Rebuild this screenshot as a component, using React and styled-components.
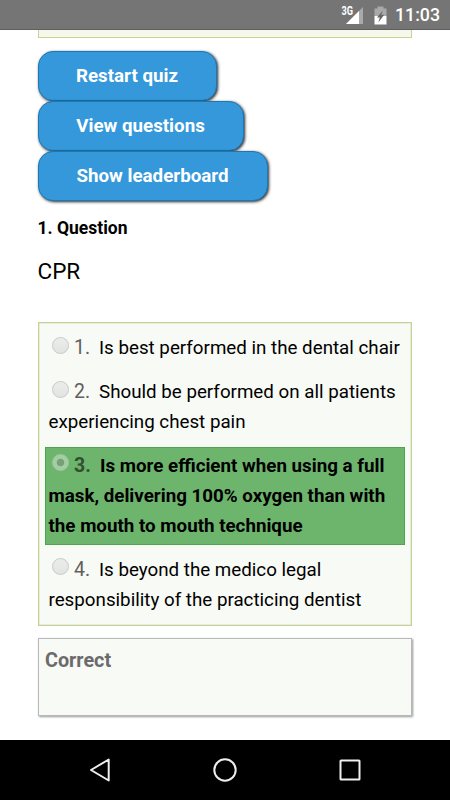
import React from "react";
import styled, { createGlobalStyle } from "styled-components";

const answers = [
  { id: 1, lines: ["Is best performed in the dental chair"] },
  {
    id: 2,
    lines: ["Should be performed on all patients", "experiencing chest pain"],
  },
  {
    id: 3,
    correct: true,
    lines: [
      "Is more efficient when using a full",
      "mask, delivering 100% oxygen than with",
      "the mouth to mouth technique",
    ],
  },
  {
    id: 4,
    lines: [
      "Is beyond the medico legal",
      "responsibility of the practicing dentist",
    ],
  },
];

const StatusBar = () => (
  <Status>
    <SignalIcon width="23" height="20" viewBox="0 0 23 20">
      <path d="M5 19 22 2V19z" fill="#a9a9a9" />
      <path d="M5 19 18 6V19z" fill="#fff" />
      <text x="0.5" y="9.5" textLength="11.5" lengthAdjust="spacingAndGlyphs">
        3G
      </text>
    </SignalIcon>
    <BatteryIcon width="13" height="19" viewBox="0 0 13 19">
      <path d="M3.5 .5h6v2h3v7.5H.5v-7.5h3z" fill="#a9a9a9" />
      <path d="M.5 10h12v8.5H.5z" fill="#fff" />
      <path d="M8.8 4.5 3 11.6h2.8L4.4 16.5l5.8-7.7H7.2z" fill="#666" />
    </BatteryIcon>
    <Clock>11:03</Clock>
  </Status>
);

const Answer = ({ item }) => (
  <AnswerItem $correct={item.correct}>
    {item.lines.map((line, i) => (
      <Line key={line}>
        {i === 0 && (
          <>
            <Radio $checked={item.correct} />
            <Num $correct={item.correct}>{item.id}.</Num>
          </>
        )}
        <span>{line}</span>
      </Line>
    ))}
  </AnswerItem>
);

const App = () => {
  return (
    <Screen>
      <GlobalStyle />
      <StatusBar />
      <Content>
        <PreviousBox />
        <Buttons>
          <Button $width="179px">Restart quiz</Button>
          <Button $width="206px">View questions</Button>
          <Button $width="230px">Show leaderboard</Button>
        </Buttons>
        <Heading>1. Question</Heading>
        <Question>CPR</Question>
        <AnswerList>
          {answers.map((item) => (
            <Answer key={item.id} item={item} />
          ))}
        </AnswerList>
        <Result>Correct</Result>
      </Content>
      <NavBar>
        <svg width="26" height="26" viewBox="0 0 26 26">
          <path d="M4 13 21.7 2.5v21z" />
        </svg>
        <svg width="26" height="26" viewBox="0 0 26 26">
          <circle cx="13" cy="13" r="10.7" />
        </svg>
        <svg width="26" height="26" viewBox="0 0 26 26">
          <rect x="3.5" y="3.5" width="19" height="19" rx="0.6" />
        </svg>
      </NavBar>
    </Screen>
  );
};

export default App;

const GlobalStyle = createGlobalStyle`
  * {
    box-sizing: border-box;
  }
  body {
    margin: 0;
    background: #fff;
    font-family: Roboto, "Liberation Sans", sans-serif;
  }
`;
const Screen = styled.div`
  width: 450px;
  height: 800px;
  display: flex;
  flex-direction: column;
  overflow: hidden;
  background: #fff;
`;
const Status = styled.header`
  flex: none;
  height: 30px;
  padding-right: 10px;
  display: flex;
  align-items: center;
  justify-content: flex-end;
  background: #757575;
  border-bottom: 1px solid #5e5e5e;
`;
const SignalIcon = styled.svg`
  margin-top: 1px;
  margin-right: 10px;

  text {
    fill: #fff;
    font-size: 12px;
    font-weight: 700;
  }
`;
const BatteryIcon = styled.svg`
  margin-top: 1px;
  margin-right: 8px;
`;
const Clock = styled.span`
  color: #fff;
  font-size: 17.75px;
  font-weight: 500;
  line-height: 30px;
  padding-top: 1px;
`;
const Content = styled.main`
  flex: 1;
  padding: 0 38px 0 37.5px;
  overflow: hidden;
`;
const PreviousBox = styled.div`
  height: 8px;
  background: #f5f8eb;
  border: solid #c4d399;
  border-width: 0 1px 1px;
`;
const Buttons = styled.div`
  display: flex;
  flex-direction: column;
  align-items: flex-start;
  padding-top: 12.5px;
`;
const Button = styled.button`
  width: ${(props) => props.$width};
  height: 50px;
  padding: 0;
  border: 1px solid #1c78b3;
  border-radius: 15px;
  background: #3498db;
  box-shadow: 1px 1px 3px rgba(0, 0, 0, 0.85);
  color: #fff;
  font-family: inherit;
  font-size: 18.75px;
  font-weight: 700;
  line-height: 48px;
`;
const Heading = styled.h5`
  margin: 17.7px 0 0;
  font-size: 17.5px;
  font-weight: 700;
  line-height: 20px;
  color: #000;
`;
const Question = styled.p`
  margin: 16.8px 0 0;
  font-size: 22.5px;
  line-height: 32px;
  color: #000;
`;
const AnswerList = styled.ul`
  display: flex;
  flex-direction: column;
  gap: 5.75px;
  margin: 34.8px 0 0;
  padding: 6.5px 6px 6px;
  list-style: none;
  background: #f8faf5;
  border: 1px solid #c4d399;
  box-shadow: inset 0 0 0 0.5px #d5dfba;
`;
const AnswerItem = styled.li`
  padding: 3px;
  border: 1px solid ${(props) => (props.$correct ? "#4ba64f" : "transparent")};
  background: ${(props) => (props.$correct ? "#6db46d" : "transparent")};
  color: #000;
  font-size: 18.75px;
  font-weight: ${(props) => (props.$correct ? 700 : 400)};
`;
const Line = styled.div`
  display: flex;
  align-items: center;
  height: 30px;
  line-height: 30px;
  white-space: nowrap;
`;
const Radio = styled.span`
  flex: none;
  width: 17px;
  height: 17px;
  margin: -6px 5.5px 0 3px;
  border-radius: 50%;
  border: 1px solid ${(props) => (props.$checked ? "#a0c7a0" : "#c9cac7")};
  background: ${(props) =>
    props.$checked
      ? "radial-gradient(circle, #78a078 3.4px, #a3cda3 4.2px)"
      : "linear-gradient(#ececeb, #e3e3e2)"};
`;
const Num = styled.span`
  width: ${(props) => (props.$correct ? "26px" : "25px")};
  color: ${(props) => (props.$correct ? "#305030" : "#606060")};
  font-size: 19.5px;
`;
const Result = styled.div`
  height: 77.5px;
  margin-top: 12.8px;
  padding: 6.5px 6.5px;
  background: #f8faf5;
  border: 1px solid #b8b8b8;
  box-shadow: 1px 1px 2px #999;
  color: #6b6b6b;
  font-size: 19.8px;
  font-weight: 700;
  line-height: 30px;
`;
const NavBar = styled.footer`
  flex: none;
  height: 60px;
  display: flex;
  align-items: center;
  justify-content: space-between;
  padding: 0 87px;
  background: #000;

  svg {
    fill: none;
    stroke: #eee;
    stroke-width: 2;
    stroke-linejoin: round;
  }
`;
